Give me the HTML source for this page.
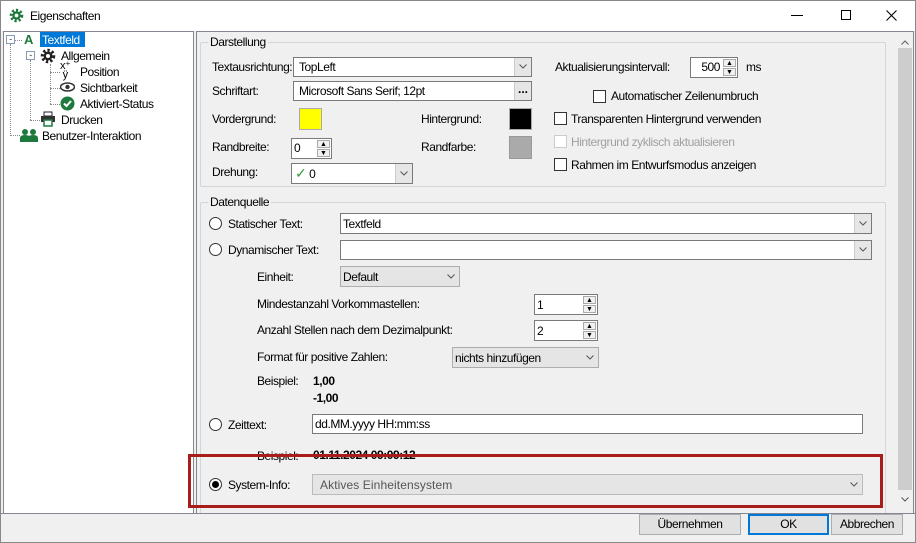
<!DOCTYPE html>
<html><head><meta charset="utf-8"><style>
*{box-sizing:border-box;margin:0;padding:0}
body{width:916px;height:543px;background:#f0f0f0;font-family:"Liberation Sans",sans-serif;font-size:12px;color:#000;position:relative;overflow:hidden;letter-spacing:-0.45px}
.a{position:absolute;white-space:nowrap}
.t{position:absolute;white-space:nowrap;line-height:14px}
.box{position:absolute;background:#fff;border:1px solid #7a7a7a}
.cb{position:absolute;width:13px;height:13px;border:1px solid #333;background:#fff}
.rd{position:absolute;width:13px;height:13px;border:1px solid #333;border-radius:50%;background:#fff}
.dd{position:absolute;right:0;top:0;bottom:0;width:17px;border-left:1px solid #ccc;background:#e6e6e6}
.chev{position:absolute;right:4px;top:50%;margin-top:-3px;width:8px;height:5px}
.grp{position:absolute;border:1px solid #d5d5d5;border-radius:2px}
.gl{position:absolute;background:#f0f0f0;padding:0 2px;line-height:14px}
.sp{position:absolute;right:0;top:0;bottom:0;width:14px;background:#fff;font-size:7px;text-align:center;line-height:8px;letter-spacing:0}
.sp div{border:1px solid #aaa;height:8px;margin:1px 1px 0 0;background:#f0f0f0}
.btn{position:absolute;border:1px solid #adadad;background:#e1e1e1;text-align:center;line-height:19px;height:21px}
</style></head><body>
<svg width="0" height="0" style="position:absolute"><defs><path id="cv" d="M0.5 0.5L4 4L7.5 0.5" fill="none" stroke="#555" stroke-width="1"/></defs></svg>
<div class="a" style="left:0;top:0;width:916px;height:31px;background:#fff;border:1px solid #888;border-bottom:none"></div>
<svg class="a" style="left:9px;top:8px" width="15" height="15" viewBox="0 0 16 16"><circle cx="8" cy="8" r="5.5" fill="none" stroke="#1e7a3c" stroke-width="3.5" stroke-dasharray="2.2 2"/><circle cx="8" cy="8" r="4.5" fill="#1e7a3c"/><circle cx="8" cy="8" r="2" fill="#fff"/></svg>
<div class="t" style="left:30px;top:9px">Eigenschaften</div>
<div class="a" style="left:791px;top:15px;width:12px;border-top:1px solid #000"></div>
<div class="a" style="left:841px;top:10px;width:10px;height:10px;border:1px solid #000"></div>
<svg class="a" style="left:886px;top:10px" width="11" height="11"><path d="M0.5 0.5L10.5 10.5M10.5 0.5L0.5 10.5" stroke="#000" stroke-width="1.1"/></svg>
<!-- tree -->
<div class="a" style="left:3px;top:31px;width:191px;height:483px;background:#fff;border:1px solid #828790"></div>
<div class="a" style="left:6px;top:35px;width:9px;height:9px;border:1px solid #8a9bb5;font-size:9px;line-height:6px;text-align:center;color:#333">-</div>
<div class="a" style="left:10px;top:44px;height:90px;border-left:1px dotted #888"></div>
<div class="a" style="left:15px;top:40px;width:7px;border-top:1px dotted #888"></div>
<div class="t" style="left:24px;top:33px;color:#1e7a3c;font-weight:bold;font-size:13px">A</div>
<div class="a" style="left:40px;top:32px;width:45px;height:15px;background:#0078d7"></div>
<div class="t" style="left:42px;top:33px;color:#fff">Textfeld</div>
<div class="a" style="left:26px;top:51px;width:9px;height:9px;border:1px solid #8a9bb5;font-size:9px;line-height:6px;text-align:center;color:#333">-</div>
<div class="a" style="left:30px;top:60px;height:60px;border-left:1px dotted #888"></div>
<svg class="a" style="left:40px;top:48px" width="16" height="16" viewBox="0 0 16 16"><circle cx="8" cy="8" r="5.5" fill="none" stroke="#222" stroke-width="3.5" stroke-dasharray="2.2 2"/><circle cx="8" cy="8" r="4.5" fill="#222"/><circle cx="8" cy="8" r="2" fill="#fff"/></svg>
<div class="t" style="left:61px;top:49px">Allgemein</div>
<div class="a" style="left:50px;top:64px;height:40px;border-left:1px dotted #888"></div>
<div class="a" style="left:50px;top:72px;width:10px;border-top:1px dotted #888"></div>
<div class="a" style="left:50px;top:88px;width:10px;border-top:1px dotted #888"></div>
<div class="a" style="left:50px;top:104px;width:10px;border-top:1px dotted #888"></div>
<div class="a" style="left:30px;top:120px;width:10px;border-top:1px dotted #888"></div>
<div class="a" style="left:10px;top:135px;width:10px;border-top:1px dotted #888"></div>
<div class="t" style="left:60px;top:62px;font-size:11px;line-height:9px">x⁺<br>&nbsp;ÿ</div>
<div class="t" style="left:80px;top:65px">Position</div>
<svg class="a" style="left:60px;top:82px" width="15" height="10"><ellipse cx="7.5" cy="5" rx="7" ry="4" fill="none" stroke="#333" stroke-width="1.5"/><circle cx="7.5" cy="5" r="2.2" fill="#333"/></svg>
<div class="t" style="left:80px;top:81px">Sichtbarkeit</div>
<svg class="a" style="left:60px;top:96px" width="15" height="15"><circle cx="7.5" cy="7.5" r="7" fill="#1e7a3c"/><path d="M4 7.5l2.5 2.5 4.5-5" stroke="#fff" stroke-width="2" fill="none"/></svg>
<div class="t" style="left:80px;top:97px">Aktiviert-Status</div>
<svg class="a" style="left:40px;top:111px" width="16" height="16"><rect x="4" y="1" width="8" height="4" fill="#fff" stroke="#222"/><rect x="1" y="5" width="14" height="6" fill="#333"/><rect x="4" y="9" width="8" height="6" fill="#fff" stroke="#1e7a3c" stroke-width="1.5"/></svg>
<div class="t" style="left:61px;top:113px">Drucken</div>
<svg class="a" style="left:20px;top:128px" width="18" height="14"><circle cx="5" cy="4" r="3" fill="#1e7a3c"/><circle cx="13" cy="4" r="3" fill="#1e7a3c"/><path d="M0 14v-4q0-3 5-3t5 3v4zM8 14v-4q0-3 5-3t5 3v4z" fill="#1e7a3c"/></svg>
<div class="t" style="left:42px;top:129px">Benutzer-Interaktion</div>
<!-- right panel -->
<div class="a" style="left:196px;top:31px;width:718px;height:483px;border:1px solid #828790"></div>
<div class="a" style="left:897px;top:32px;width:16px;height:481px;background:#f0f0f0"></div>
<div class="a" style="left:898px;top:48px;width:14px;height:442px;background:#cdcdcd"></div>
<svg class="a" style="left:901px;top:40px" width="8" height="5"><path d="M0.5 4.5L4 1L7.5 4.5" fill="none" stroke="#606060"/></svg>
<svg class="a" style="left:901px;top:497px" width="8" height="5"><use href="#cv"/></svg>
<!-- Darstellung -->
<div class="grp" style="left:200px;top:42px;width:686px;height:145px"></div>
<div class="gl" style="left:208px;top:35px">Darstellung</div>
<div class="t" style="left:212px;top:60px">Textausrichtung:</div>
<div class="box" style="left:293px;top:57px;width:239px;height:20px"><span class="t" style="left:5px;top:2px">TopLeft</span><div class="dd"><svg class="chev"><use href="#cv"/></svg></div></div>
<div class="t" style="left:212px;top:84px">Schriftart:</div>
<div class="box" style="left:293px;top:81px;width:239px;height:20px"><span class="t" style="left:5px;top:2px">Microsoft Sans Serif; 12pt</span><div class="dd" style="font-weight:bold;text-align:center;line-height:14px;letter-spacing:0">...</div></div>
<div class="t" style="left:212px;top:112px">Vordergrund:</div>
<div class="a" style="left:299px;top:108px;width:23px;height:22px;background:#ff0;border:1px solid #aaa"></div>
<div class="t" style="left:421px;top:112px">Hintergrund:</div>
<div class="a" style="left:509px;top:108px;width:23px;height:22px;background:#000;border:1px solid #aaa"></div>
<div class="t" style="left:212px;top:140px">Randbreite:</div>
<div class="box" style="left:291px;top:138px;width:41px;height:21px"><span class="t" style="left:2px;top:2px">0</span><div class="sp"><div>▲</div><div>▼</div></div></div>
<div class="t" style="left:421px;top:140px">Randfarbe:</div>
<div class="a" style="left:509px;top:136px;width:23px;height:23px;background:#aaa;border:1px solid #999"></div>
<div class="t" style="left:212px;top:165px">Drehung:</div>
<div class="box" style="left:291px;top:163px;width:122px;height:21px"><span class="t" style="left:3px;top:2px"><span style="color:#3a9a3a;font-size:14px">✓</span> 0</span><div class="dd"><svg class="chev"><use href="#cv"/></svg></div></div>
<div class="t" style="left:555px;top:60px">Aktualisierungsintervall:</div>
<div class="box" style="left:690px;top:57px;width:48px;height:21px"><span class="t" style="right:17px;top:2px">500</span><div class="sp"><div>▲</div><div>▼</div></div></div>
<div class="t" style="left:746px;top:60px">ms</div>
<div class="cb" style="left:593px;top:90px"></div><div class="t" style="left:611px;top:89px">Automatischer Zeilenumbruch</div>
<div class="cb" style="left:554px;top:112px"></div><div class="t" style="left:571px;top:112px">Transparenten Hintergrund verwenden</div>
<div class="cb" style="left:554px;top:135px;border-color:#ccc"></div><div class="t" style="left:571px;top:135px;color:#a0a0a0">Hintergrund zyklisch aktualisieren</div>
<div class="cb" style="left:554px;top:158px"></div><div class="t" style="left:571px;top:158px">Rahmen im Entwurfsmodus anzeigen</div>
<!-- Datenquelle -->
<div class="grp" style="left:200px;top:202px;width:686px;height:320px"></div>
<div class="gl" style="left:208px;top:195px">Datenquelle</div>
<div class="rd" style="left:209px;top:217px"></div><div class="t" style="left:228px;top:217px">Statischer Text:</div>
<div class="box" style="left:340px;top:213px;width:532px;height:21px"><span class="t" style="left:2px;top:3px">Textfeld</span><div class="dd"><svg class="chev"><use href="#cv"/></svg></div></div>
<div class="rd" style="left:209px;top:243px"></div><div class="t" style="left:228px;top:243px">Dynamischer Text:</div>
<div class="box" style="left:340px;top:240px;width:532px;height:20px"><div class="dd"><svg class="chev"><use href="#cv"/></svg></div></div>
<div class="t" style="left:257px;top:270px">Einheit:</div>
<div class="box" style="left:340px;top:266px;width:120px;height:21px;background:#e5e5e5;border-color:#adadad"><span class="t" style="left:2px;top:3px">Default</span><svg class="chev"><use href="#cv"/></svg></div>
<div class="t" style="left:257px;top:297px">Mindestanzahl Vorkommastellen:</div>
<div class="box" style="left:534px;top:294px;width:64px;height:21px"><span class="t" style="left:2px;top:3px">1</span><div class="sp"><div>▲</div><div>▼</div></div></div>
<div class="t" style="left:257px;top:323px">Anzahl Stellen nach dem Dezimalpunkt:</div>
<div class="box" style="left:534px;top:320px;width:64px;height:21px"><span class="t" style="left:2px;top:3px">2</span><div class="sp"><div>▲</div><div>▼</div></div></div>
<div class="t" style="left:257px;top:350px">Format für positive Zahlen:</div>
<div class="box" style="left:452px;top:347px;width:147px;height:21px;background:#e5e5e5;border-color:#adadad"><span class="t" style="left:2px;top:3px">nichts hinzufügen</span><svg class="chev"><use href="#cv"/></svg></div>
<div class="t" style="left:257px;top:374px">Beispiel:</div>
<div class="t" style="left:313px;top:374px;font-weight:bold">1,00</div>
<div class="t" style="left:313px;top:391px;font-weight:bold">-1,00</div>
<div class="rd" style="left:209px;top:418px"></div><div class="t" style="left:228px;top:418px">Zeittext:</div>
<div class="box" style="left:312px;top:414px;width:551px;height:20px"><span class="t" style="left:2px;top:2px">dd.MM.yyyy HH:mm:ss</span></div>
<div class="t" style="left:257px;top:449px">Beispiel:</div>
<div class="t" style="left:313px;top:448px;font-weight:bold">01.11.2024 09:09:12</div>
<div class="rd" style="left:209px;top:478px"><div style="position:absolute;left:2px;top:2px;width:7px;height:7px;border-radius:50%;background:#000"></div></div>
<div class="t" style="left:228px;top:478px">System-Info:</div>
<div class="box" style="left:312px;top:474px;width:551px;height:21px;background:#e5e5e5;border-color:#bbb"><span class="t" style="left:7px;top:3px;color:#555;letter-spacing:0.1px">Aktives Einheitensystem</span><svg class="chev"><use href="#cv"/></svg></div>
<div class="a" style="left:188px;top:454px;width:695px;height:54px;border:3px solid #a81c1c"></div>
<!-- bottom -->
<div class="a" style="left:0;top:513px;width:916px;height:30px;background:#f0f0f0;border-top:1px solid #828790"></div>
<div class="btn" style="left:639px;top:514px;width:102px">Übernehmen</div>
<div class="btn" style="left:748px;top:514px;width:81px;border:2px solid #0078d7;line-height:17px">OK</div>
<div class="btn" style="left:831px;top:514px;width:72px">Abbrechen</div>
<div class="a" style="left:0;top:0;width:916px;height:543px;border:1px solid #888;pointer-events:none"></div>
</body></html>
